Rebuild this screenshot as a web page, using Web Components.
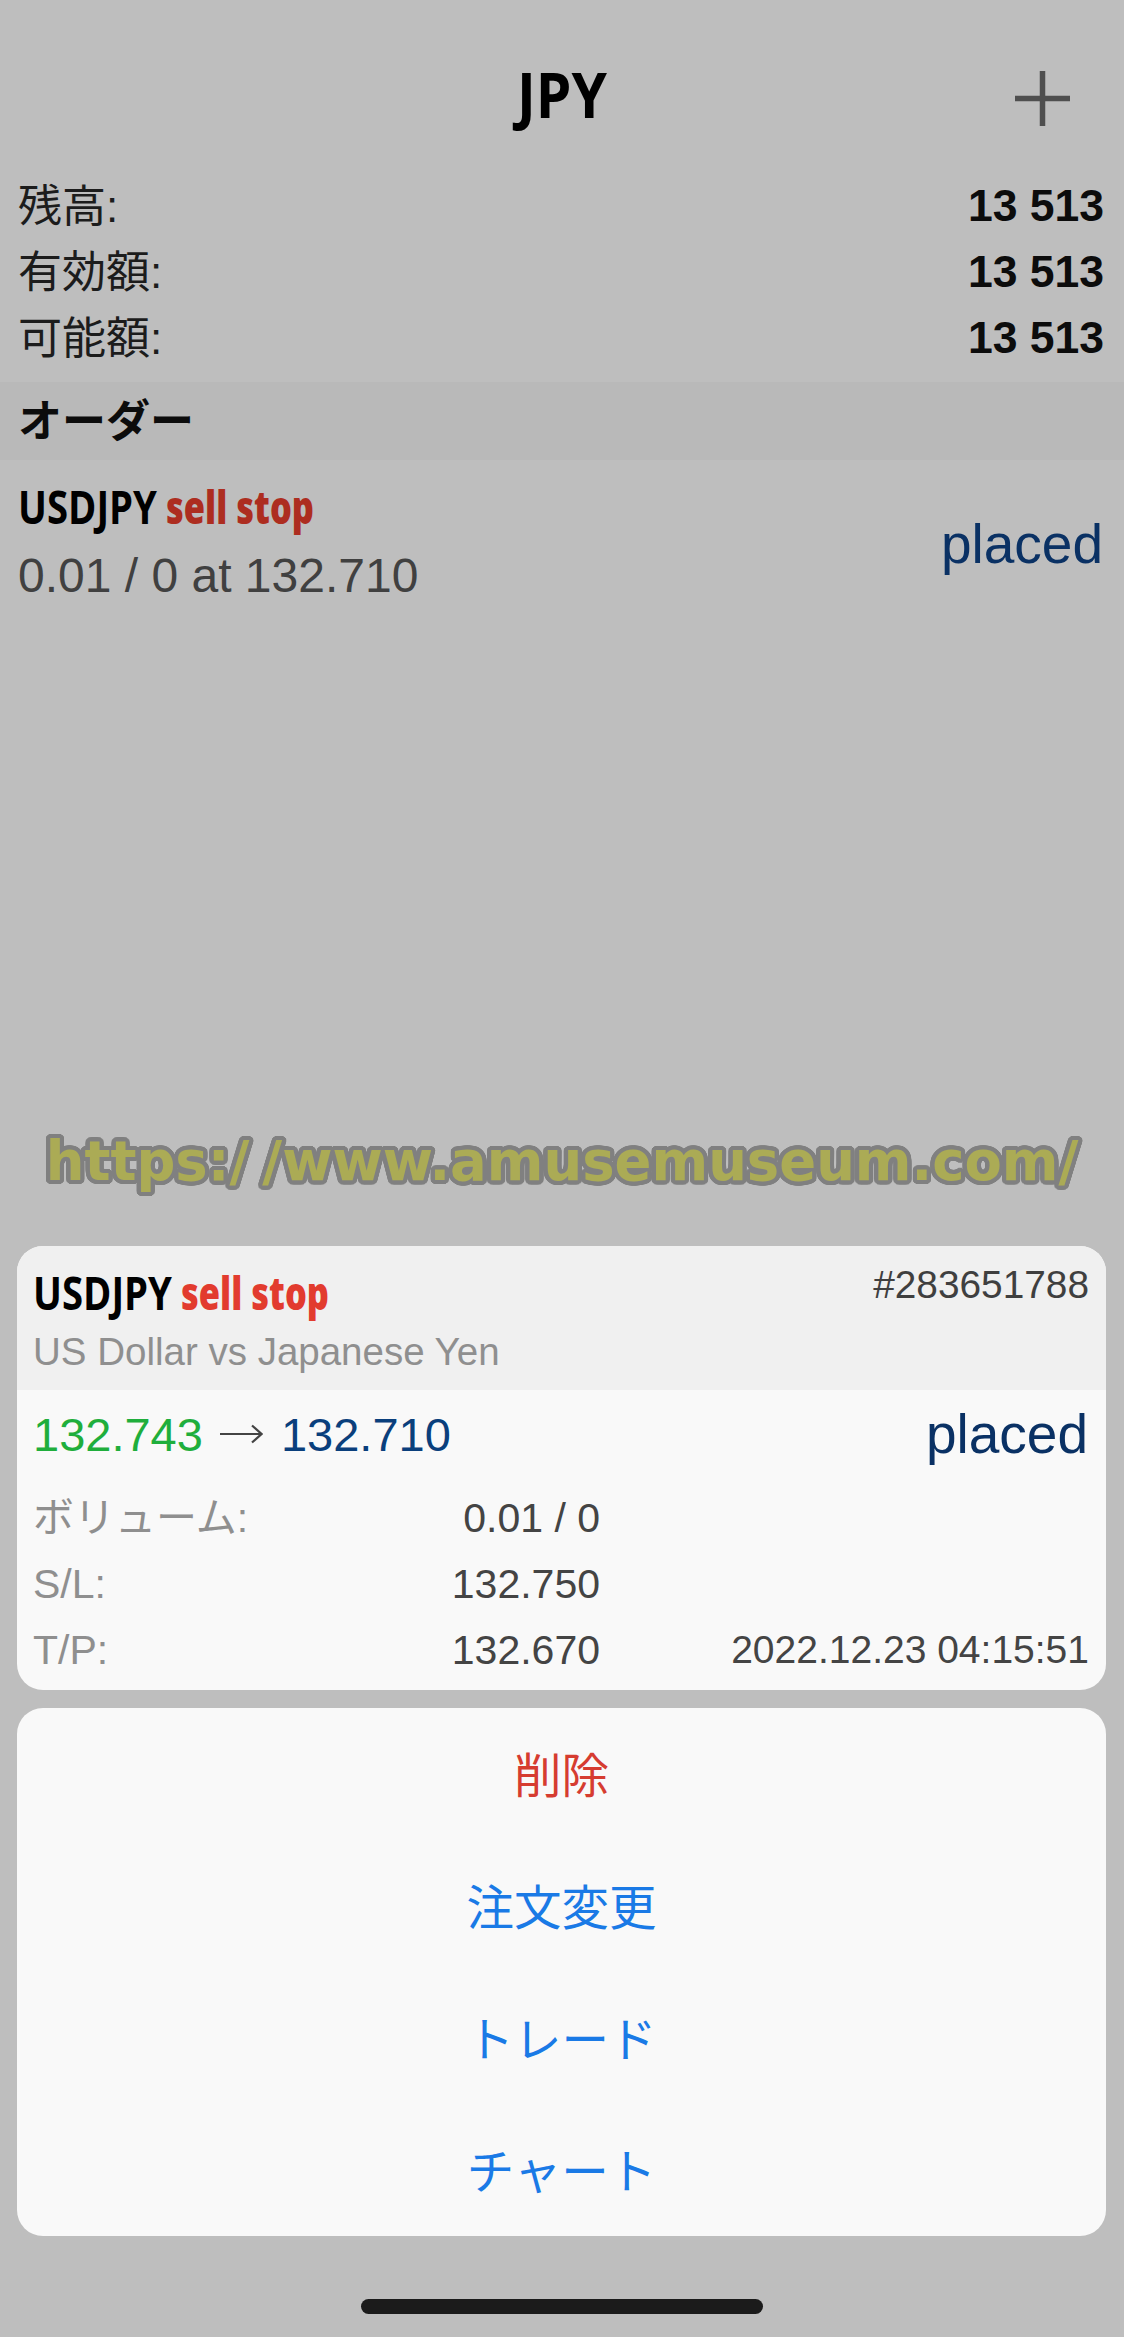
<!DOCTYPE html>
<html lang="ja"><head><meta charset="utf-8">
<style>
html,body{margin:0;padding:0;background:#bebebe}
body{width:1124px;height:2337px;overflow:hidden;font-family:"Liberation Sans","Noto Sans CJK JP",sans-serif}
</style></head><body>
<mt-screen>
  <mt-header slot="top">JPY</mt-header>
  <mt-balance slot="top" label="残高:" value="13 513"></mt-balance>
  <mt-balance slot="top" label="有効額:" value="13 513"></mt-balance>
  <mt-balance slot="top" label="可能額:" value="13 513"></mt-balance>
  <mt-section slot="top">オーダー</mt-section>
  <mt-order slot="top"></mt-order>
  <mt-watermark slot="top">https:/<span style="margin-left:13px">/</span>www.amusemuseum.com/</mt-watermark>
  <mt-card slot="bottom"></mt-card>
  <mt-sheet slot="bottom">
    <mt-action danger>削除</mt-action>
    <mt-action>注文変更</mt-action>
    <mt-action>トレード</mt-action>
    <mt-action>チャート</mt-action>
  </mt-sheet>
</mt-screen>
<script>
const CJK='"Noto Sans CJK JP"';
const SANS='"Liberation Sans","Noto Sans CJK JP",sans-serif';
const COND='"Open Sans","Liberation Sans",sans-serif';
/* round outline for the watermark: a ring of hard shadows */
const RING=Array.from({length:32},(_,i)=>{const a=i/32*2*Math.PI;return (4.2*Math.cos(a)).toFixed(2)+'px '+(4.2*Math.sin(a)).toFixed(2)+'px 0 #808080';}).join(',');
function def(name,css,html,init){
  customElements.define(name,class extends HTMLElement{
    constructor(){super();const r=this.attachShadow({mode:'open'});r.innerHTML='<style>'+css+'</style>'+html;}
    connectedCallback(){if(init)init(this,this.shadowRoot);}
  });
}
/* condensed text: squeezes its text horizontally to the width given */
def('mt-cond',`:host{display:inline-block;white-space:nowrap;vertical-align:baseline}
span{display:inline-block;transform-origin:0 50%}`,`<span><slot></slot></span>`,(h,r)=>{
  const s=r.querySelector('span'),w=+h.getAttribute('w');
  h.style.width=w+'px';
  const natural=s.getBoundingClientRect().width;
  if(natural>0)s.style.transform='scaleX('+(w/natural)+')';
});
def('mt-screen',`:host{display:flex;flex-direction:column;position:relative;width:1124px;height:2337px;background:#bebebe;color:#000}
.top{flex:1;display:block}.bottom{display:flex;flex-direction:column;gap:18px;padding:0 18px 0 17px}
.home{height:101px;display:flex;justify-content:center;align-items:flex-start}
.bar{width:402px;height:15px;margin-top:63px;border-radius:8px;background:#1b1b1b}`,
`<div class="top"><slot name="top"></slot></div><div class="bottom"><slot name="bottom"></slot></div><div class="home"><div class="bar"></div></div>`);
def('mt-header',`:host{display:flex;height:171px;position:relative;justify-content:center;box-sizing:border-box;padding-top:57px}
.t{font:700 63px/74px ${COND}}
svg{position:absolute;right:54px;top:71px}`,
`<div class="t"><mt-cond w="90"><slot></slot></mt-cond></div><svg width="55" height="55" viewBox="0 0 55 55"><path d="M27.5 0V55M0 27.5H55" stroke="#4f4f4f" stroke-width="5.5" fill="none"/></svg>`);
def('mt-balance',`:host{display:flex;justify-content:space-between;height:66px;padding:0 20px 0 18px}
.l{font:400 44px/72px ${SANS};color:#1c1c1c}.v{font:700 44.5px/70px "Liberation Sans";color:#0c0c0c}`,
`<span class="l"></span><span class="v"></span>`,(h,r)=>{r.querySelector('.l').textContent=h.getAttribute('label');r.querySelector('.v').textContent=h.getAttribute('value');});
def('mt-section',`:host{display:block;height:78px;margin-top:13px;padding:0 18px;background:#b9b9b9;font:700 44px/80px ${SANS};color:#0c0c0c}`,`<slot></slot>`);
def('mt-order',`:host{display:flex;justify-content:space-between;height:170px;padding:0 21px 0 18px;box-sizing:border-box}
.a{font:700 46px/60px ${COND};margin-top:16px;color:#000;white-space:nowrap;display:flex}.a b{color:#ad2d20;margin-left:9px;display:block}
.b{font:400 48px/66px "Liberation Sans";margin-top:7px;color:#404040}
.p{font:400 55px/66px "Liberation Sans";margin-top:51px;color:#0a3164}`,
`<div><div class="a"><mt-cond w="139">USDJPY</mt-cond><b><mt-cond w="148">sell stop</mt-cond></b></div><div class="b">0.01 / 0 at 132.710</div></div><div class="p">placed</div>`);
def('mt-watermark',`:host{position:absolute;left:0;right:0;top:1129px;text-align:center;white-space:nowrap;font:700 54.4px/66px "DejaVu Sans";color:#abab55;text-shadow:${RING}}`,`<slot></slot>`);
def('mt-card',`:host{display:block;border-radius:26px;overflow:hidden;background:#f9f9f9;height:444px}
.h{background:#f0f0f0;height:144px;padding:0 17px 0 16px;display:flex;justify-content:space-between;box-sizing:border-box}
.s{font:700 46px/60px ${COND};margin-top:16px;white-space:nowrap;display:flex}.s b{color:#e23b2e;margin-left:9px;display:block}
.n{font:400 38.5px/48px ${SANS};color:#8f8f8f;margin-top:6px}
.id{font:400 38.8px/44px "Liberation Sans";color:#3f3f3f;margin-top:17px}
.r1{display:flex;justify-content:space-between;height:88px;padding:0 18px 0 16px;font:400 47px/90px "Liberation Sans";color:#0a3f7c}
.nums{display:flex}.g{color:#1fae3c}
.ar{margin:34px 18px 0 17px;flex:none}
.pl{color:#0a3164;font-size:55px;line-height:88px}
.rows{display:grid;grid-template-columns:567px 1fr;grid-auto-rows:66px;padding:7px 17px 0 16px;font:400 41px/66px ${SANS}}
.row{display:flex;justify-content:space-between}
.l{color:#8f8f8f}.v{color:#444}
.ts{text-align:right;color:#444;font-size:39px;grid-column:2;grid-row:3}`,
`<div class="h"><div><div class="s"><mt-cond w="139">USDJPY</mt-cond><b><mt-cond w="148">sell stop</mt-cond></b></div><div class="n">US Dollar vs Japanese Yen</div></div><div class="id">#283651788</div></div>
<div class="r1"><div class="nums"><span class="g">132.743</span><svg class="ar" width="43" height="20" viewBox="0 0 43 20"><path d="M0 10H41M32 1.5L41.5 10L32 18.5" fill="none" stroke="#444" stroke-width="2.2"/></svg><span>132.710</span></div><div class="pl">placed</div></div>
<div class="rows"><div class="row" style="grid-column:1;grid-row:1"><span class="l">ボリューム:</span><span class="v">0.01 / 0</span></div>
<div class="row" style="grid-column:1;grid-row:2"><span class="l">S/L:</span><span class="v">132.750</span></div>
<div class="row" style="grid-column:1;grid-row:3"><span class="l">T/P:</span><span class="v">132.670</span></div>
<div class="ts">2022.12.23 04:15:51</div></div>`);
def('mt-sheet',`:host{display:flex;flex-direction:column;border-radius:26px;background:#f9f9f9;overflow:hidden}`,`<slot></slot>`);
def('mt-action',`:host{display:block;text-align:center;height:132px;font:400 47.5px/129px ${CJK};color:#1a7ae6}
:host([danger]){color:#d63c30}`,`<slot></slot>`);
</script>
</body></html>
